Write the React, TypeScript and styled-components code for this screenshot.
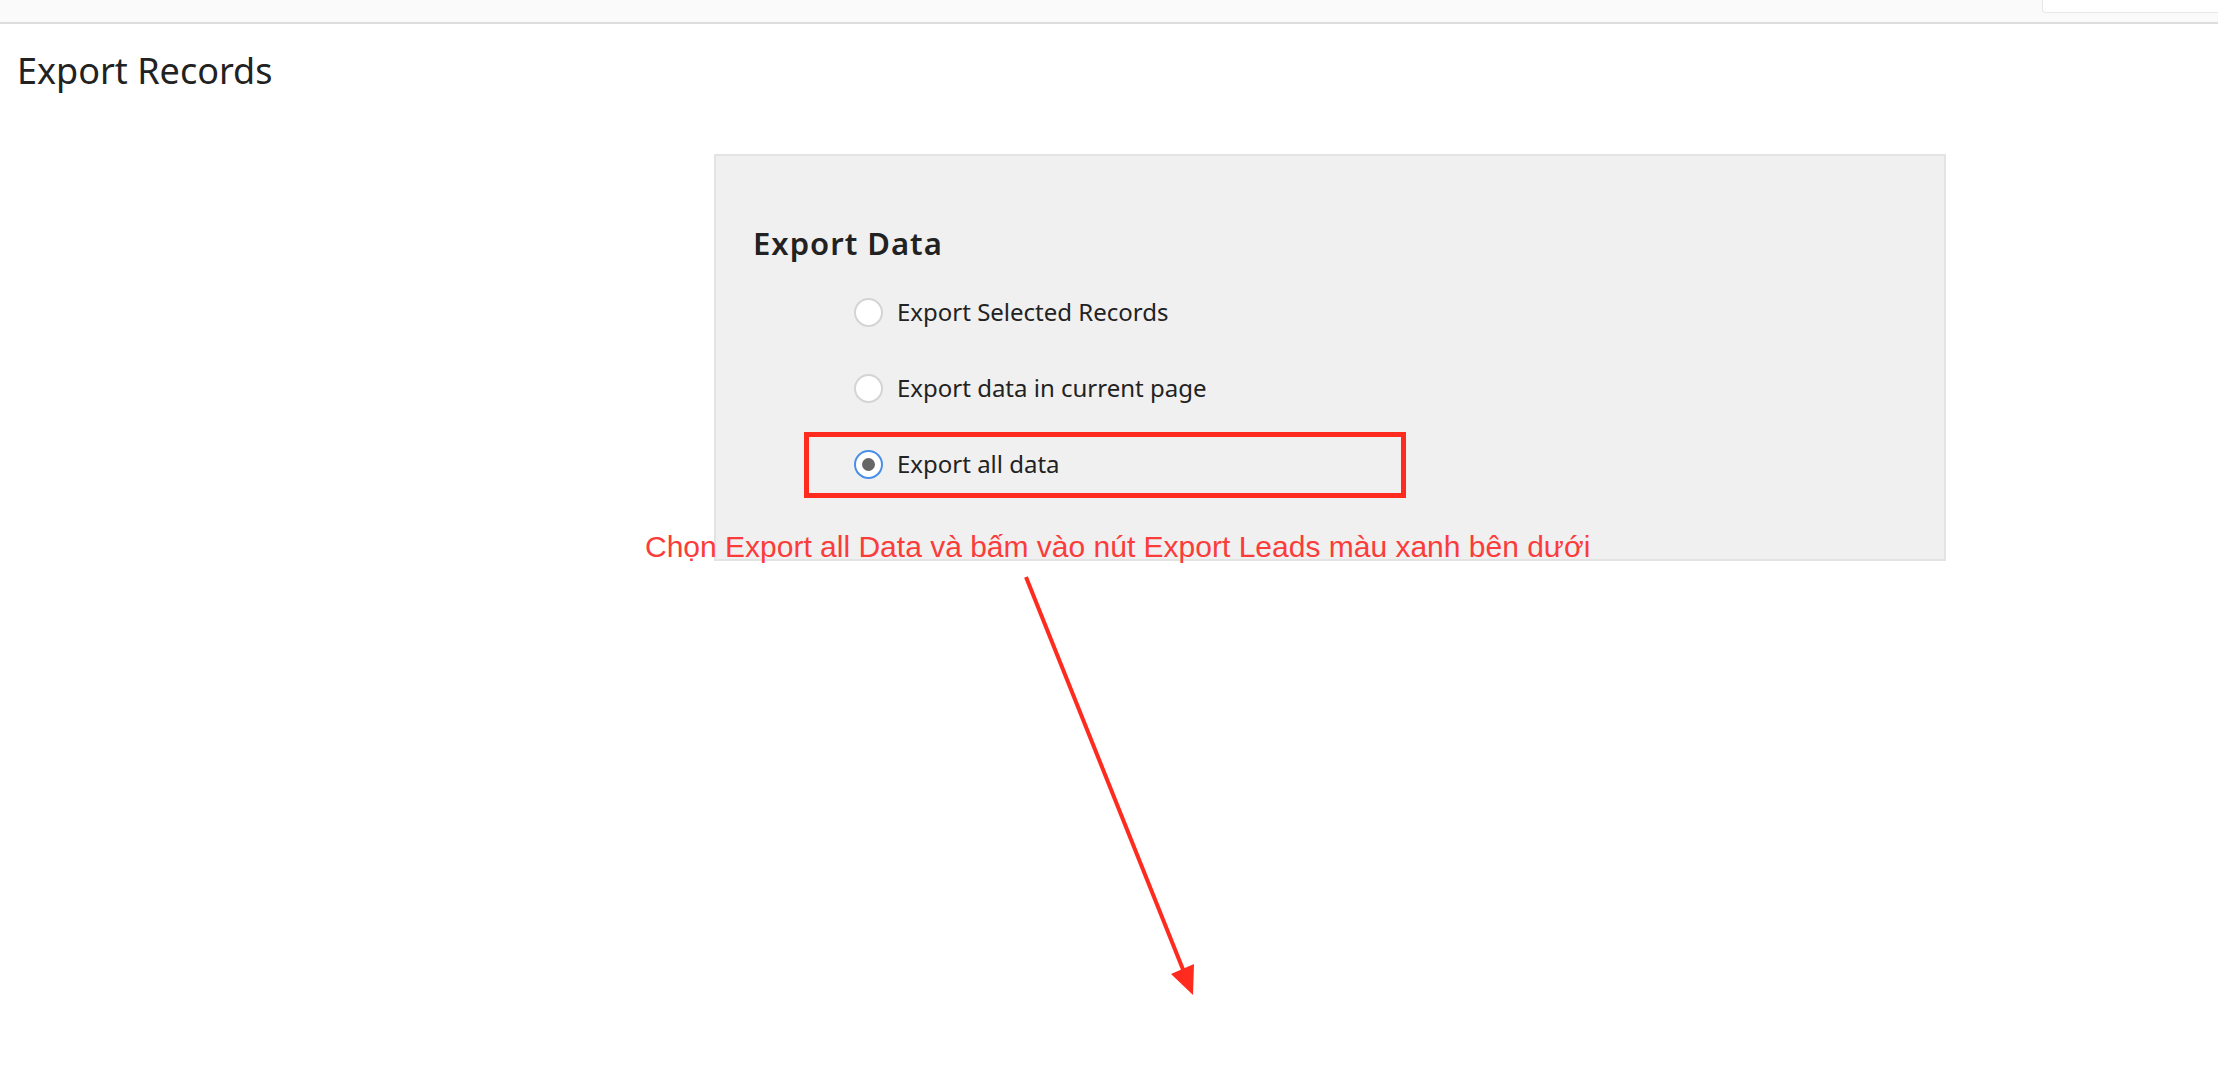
import React from 'react';
import styled, { createGlobalStyle } from 'styled-components';

const GlobalStyle = createGlobalStyle`
  html, body {
    margin: 0;
    padding: 0;
    background: #ffffff;
  }
  body {
    font-family: 'Noto Sans', 'Open Sans', sans-serif;
    color: #222222;
  }
`;

const Page = styled.div`
  position: relative;
  width: 2218px;
  min-height: 1072px;
  overflow: hidden;
  background: #ffffff;
`;

const TopBar = styled.div`
  display: flex;
  justify-content: flex-end;
  align-items: flex-start;
  height: 22px;
  background: #fafafa;
  border-bottom: 2px solid #dddddd;
`;

const SearchBox = styled.div`
  width: 175px;
  height: 12px;
  background: #ffffff;
  border: 1px solid #e6e6e6;
  border-top: none;
  border-right: none;
  border-bottom-left-radius: 4px;
`;

const Title = styled.h1`
  margin: 23px 0 0 17px;
  font-size: 36px;
  line-height: 48px;
  font-weight: 400;
  color: #222222;
`;

const Panel = styled.section`
  box-sizing: border-box;
  margin: 59px 0 0 714px;
  width: 1232px;
  height: 407px;
  padding: 67px 0 0 37px;
  background: #f0f0f0;
  border: 2px solid #e3e3e3;
`;

const SectionTitle = styled.h2`
  margin: 0;
  font-size: 31px;
  line-height: 40px;
  font-weight: 600;
  letter-spacing: 1px;
  color: #222222;
`;

const Options = styled.div`
  display: flex;
  flex-direction: column;
  gap: 36px;
  margin: 29px 0 0 101px;
`;

const Option = styled.label`
  display: flex;
  align-items: center;
  gap: 14px;
  height: 40px;
  font-size: 24px;
  line-height: 40px;
  color: #222222;
`;

const Radio = styled.span<{ checked?: boolean }>`
  box-sizing: border-box;
  display: flex;
  align-items: center;
  justify-content: center;
  width: 29px;
  height: 29px;
  border-radius: 50%;
  background: #ffffff;
  border: ${(p) => (p.checked ? '2px solid #4a8fe7' : '2px solid #d4d4d4')};

  &::after {
    content: '';
    display: ${(p) => (p.checked ? 'block' : 'none')};
    width: 13px;
    height: 13px;
    border-radius: 50%;
    background: #666666;
  }
`;

const HighlightBox = styled.div`
  position: absolute;
  left: 804px;
  top: 432px;
  width: 602px;
  height: 66px;
  box-sizing: border-box;
  border: 5px solid #ff2b1f;
`;

const Note = styled.div`
  position: absolute;
  left: 645px;
  top: 532px;
  font-family: 'Liberation Sans', Arial, sans-serif;
  font-size: 30px;
  line-height: 30px;
  color: #fb3c3a;
  white-space: nowrap;
`;

const ArrowLayer = styled.svg`
  position: absolute;
  left: 1000px;
  top: 560px;
`;

const options = [
  { label: 'Export Selected Records', checked: false },
  { label: 'Export data in current page', checked: false },
  { label: 'Export all data', checked: true },
];

export default function App() {
  return (
    <Page>
      <GlobalStyle />
      <TopBar>
        <SearchBox />
      </TopBar>
      <Title>Export Records</Title>
      <Panel>
        <SectionTitle>Export Data</SectionTitle>
        <Options>
          {options.map((o) => (
            <Option key={o.label}>
              <Radio checked={o.checked} />
              {o.label}
            </Option>
          ))}
        </Options>
      </Panel>

      <HighlightBox />
      <Note>Chọn Export all Data và bấm vào nút Export Leads màu xanh bên dưới</Note>
      <ArrowLayer width="220" height="450" viewBox="0 0 220 450">
        <line x1="26" y1="17" x2="184" y2="412" stroke="#ff2b1f" strokeWidth="4" />
        <polygon points="193,435 194,404 171,414" fill="#ff2b1f" />
      </ArrowLayer>
    </Page>
  );
}
